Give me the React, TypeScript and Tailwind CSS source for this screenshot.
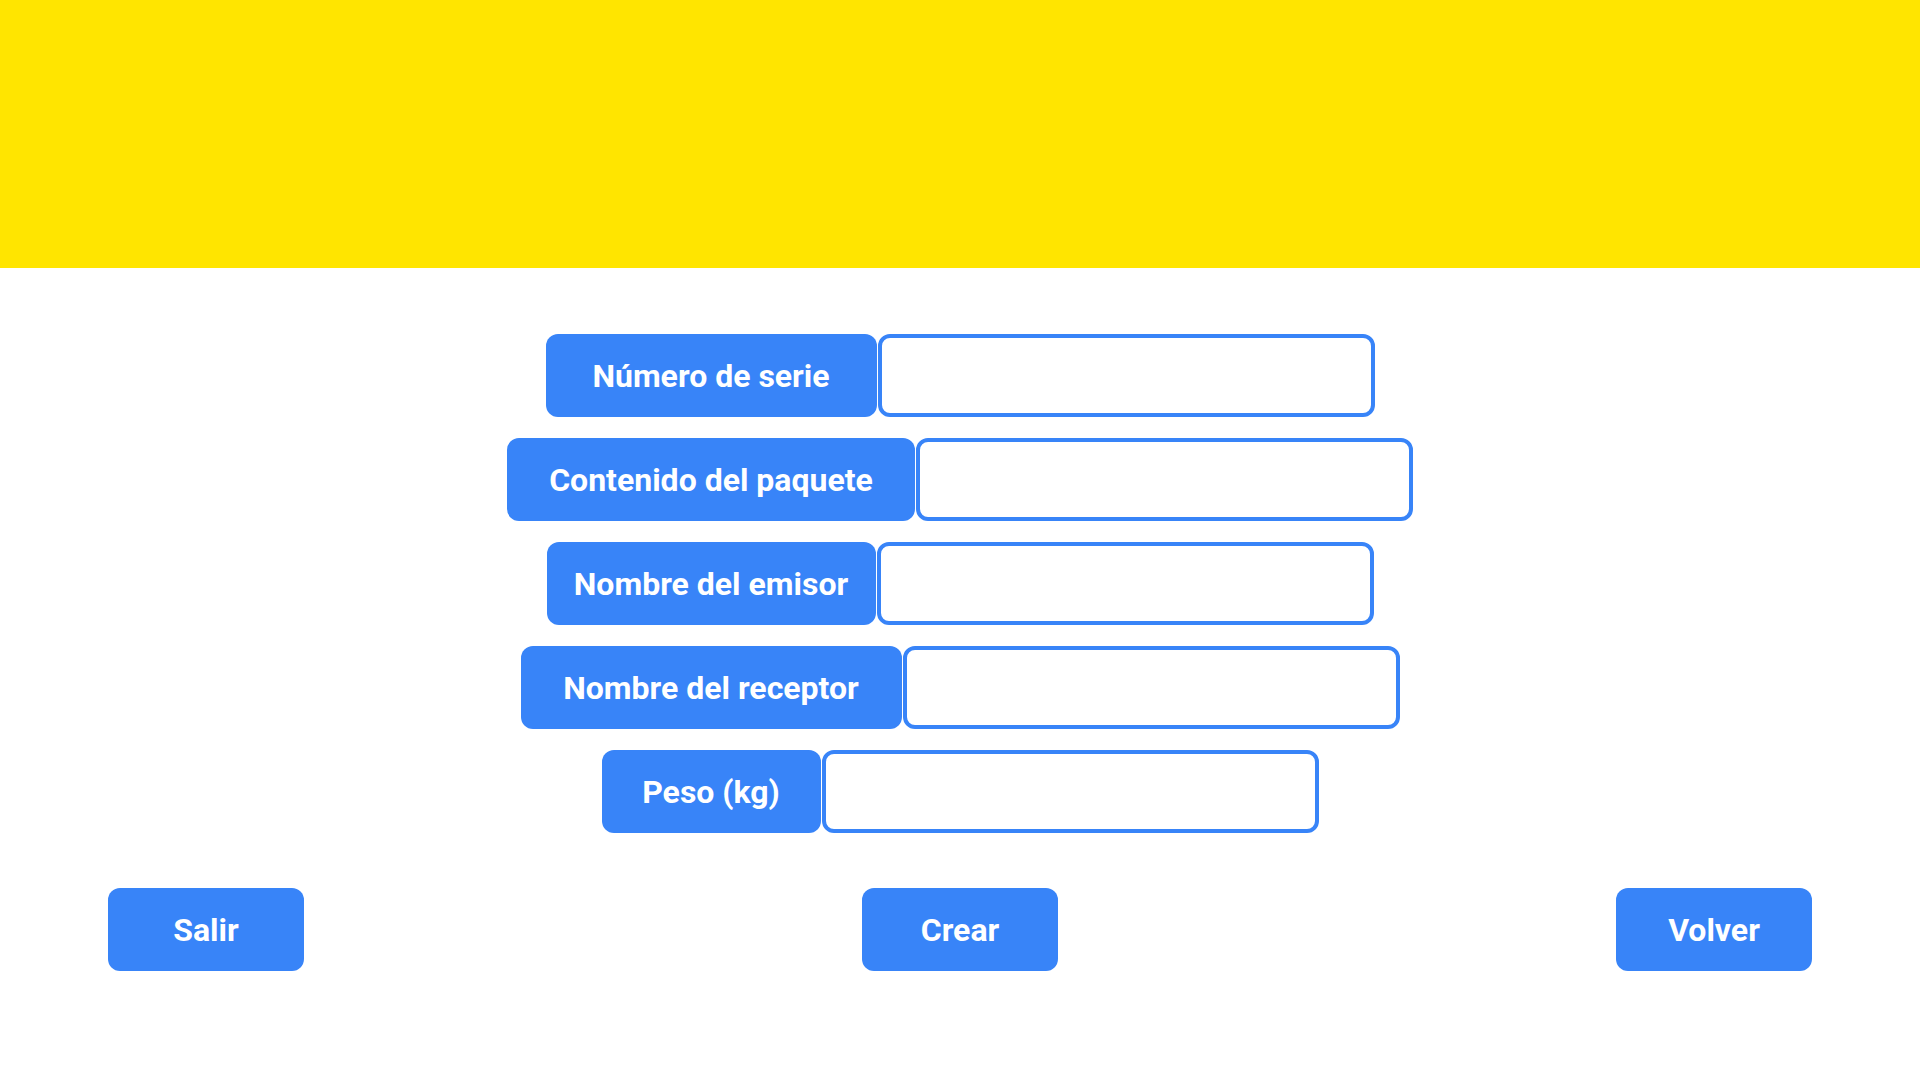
import React from "react";

const rows = [
  { label: "Número de serie", w: "w-[331px]" },
  { label: "Contenido del paquete", w: "w-[408px]" },
  { label: "Nombre del emisor", w: "w-[329px]" },
  { label: "Nombre del receptor", w: "w-[381px]" },
  { label: "Peso (kg)", w: "w-[219px]" },
];

export default function App() {
  return (
    <div className="w-[1920px] h-[1080px] bg-white flex flex-col" style={{ fontFamily: "Roboto, 'Liberation Sans', sans-serif" }}>
      <div className="h-[268px] bg-[#ffe500] shrink-0" />
      <div className="flex flex-col items-center gap-[21px] pt-[66px]">
        {rows.map((r) => (
          <div key={r.label} className="flex h-[83px] gap-[1px]">
            <div className={`${r.w} h-full rounded-[12px] bg-[#3884f8] text-white font-bold text-[32px] flex items-center justify-center`}>
              {r.label}
            </div>
            <input className="w-[497px] h-full rounded-[12px] border-4 border-[#3884f8] bg-white outline-none" />
          </div>
        ))}
      </div>
      <div className="flex justify-between px-[108px] mt-[55px]">
        {["Salir", "Crear", "Volver"].map((b) => (
          <button key={b} className="w-[196px] h-[83px] rounded-[12px] bg-[#3884f8] text-white font-bold text-[32px] flex items-center justify-center">
            {b}
          </button>
        ))}
      </div>
    </div>
  );
}
